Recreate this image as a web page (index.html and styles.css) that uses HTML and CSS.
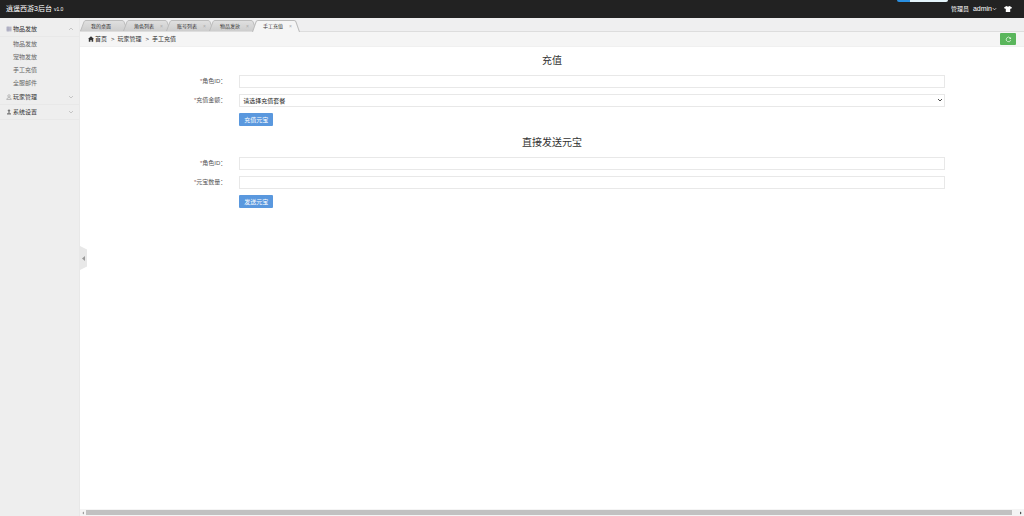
FILE: index.html
```html
<!DOCTYPE html>
<html lang="zh-CN">
<head>
    <meta charset="UTF-8">
    <meta name="viewport" content="width=device-width, initial-scale=1.0">
    <title>逍遥西游3后台</title>
    <link rel="stylesheet" href="styles.css">
</head>
<body>
    <svg class="defs" aria-hidden="true">
        <linearGradient id="tabFill" x1="0" y1="0" x2="0" y2="1">
            <stop offset="0" stop-color="#e0e0e0"/>
            <stop offset="1" stop-color="#cdcdcd"/>
        </linearGradient>
        <symbol id="tab-shape" viewBox="0 0 48 11" preserveAspectRatio="none">
            <path d="M0.5 11 L4 1.8 Q4.5 0.5 6 0.5 H42 Q43.5 0.5 44 1.8 L47.5 11"/>
        </symbol>
        <symbol id="chevron" viewBox="0 0 6 4">
            <path d="M1 1 L3 3 L5 1" fill="none" stroke="currentColor" stroke-width="0.8"/>
        </symbol>
    </svg>

    <header class="navbar">
        <a class="logo" href="#">逍遥西游3后台</a>
        <span class="version">v1.0</span>
        <div class="notice"></div>
        <nav class="userbar">
            <span>管理员</span>
            <a class="user" href="#">admin<svg class="chevron"><use href="#chevron"/></svg></a>
            <a class="skin" href="#" aria-label="换肤">
                <svg viewBox="0 0 8 6"><path d="M2.4 0 Q4 1.2 5.6 0 L8 1.6 L7 3 L6.2 2.6 V6 H1.8 V2.6 L1 3 L0 1.6 Z" fill="#fff"/></svg>
            </a>
        </nav>
    </header>

    <div class="layout">
        <aside class="sidebar">
            <div class="menu-title">
                <svg class="menu-icon" viewBox="0 0 6 6"><path d="M0.5 0.5 H5.5 V5.5 H0.5 Z" fill="#c0c0d0"/><path d="M0.5 2 H5.5 M0.5 3.8 H5.5 M2 0.5 V5.5" stroke="#9898b0" stroke-width="0.5"/></svg>
                物品发放
                <svg class="chevron up"><use href="#chevron"/></svg>
            </div>
            <ul class="menu-list">
                <li><a href="#">物品发放</a></li>
                <li><a href="#">宠物发放</a></li>
                <li><a href="#">手工充值</a></li>
                <li><a href="#">全服邮件</a></li>
            </ul>
            <div class="menu-title">
                <svg class="menu-icon" viewBox="0 0 6 6"><circle cx="3" cy="1.9" r="1.2" fill="none" stroke="#999" stroke-width="0.6"/><path d="M0.7 5.5 Q0.9 3.6 3 3.6 Q5.1 3.6 5.3 5.5 Z" fill="none" stroke="#999" stroke-width="0.6"/></svg>
                玩家管理
                <svg class="chevron"><use href="#chevron"/></svg>
            </div>
            <div class="menu-title">
                <svg class="menu-icon" viewBox="0 0 6 6"><circle cx="3" cy="1.6" r="1.2" fill="#777"/><path d="M2.4 2.5 H3.6 V4.2 H5 V5.6 H1 V4.2 H2.4 Z" fill="#777"/></svg>
                系统设置
                <svg class="chevron"><use href="#chevron"/></svg>
            </div>
        </aside>

        <main class="content">
            <button class="collapse" type="button" aria-label="收起菜单">
                <svg viewBox="0 0 3 5"><path d="M3 0 V5 L0 2.5 Z" fill="#999"/></svg>
            </button>

            <nav class="tabs">
                <a class="tab" href="#"><svg class="tab-bg"><use href="#tab-shape"/></svg><span>我的桌面</span></a>
                <a class="tab" href="#"><svg class="tab-bg"><use href="#tab-shape"/></svg><span>角色列表</span><i>×</i></a>
                <a class="tab" href="#"><svg class="tab-bg"><use href="#tab-shape"/></svg><span>账号列表</span><i>×</i></a>
                <a class="tab" href="#"><svg class="tab-bg"><use href="#tab-shape"/></svg><span>物品发放</span><i>×</i></a>
                <a class="tab active" href="#"><svg class="tab-bg"><use href="#tab-shape"/></svg><span>手工充值</span><i>×</i></a>
            </nav>

            <div class="breadcrumb">
                <svg class="home" viewBox="0 0 6 6"><path d="M3 0.3 L6 3.1 H5.2 V5.7 H3.6 V3.9 H2.4 V5.7 H0.8 V3.1 H0 Z" fill="#333"/></svg>
                <a href="#">首页</a>
                <span class="sep">&gt;</span>
                <span>玩家管理</span>
                <span class="sep">&gt;</span>
                <span>手工充值</span>
                <button class="refresh" type="button" aria-label="刷新">
                    <svg viewBox="0 0 8 8"><path d="M6.5 4.6 A2.6 2.6 0 1 1 5.9 2.2" fill="none" stroke="#dff3df" stroke-width="0.9"/><path d="M6.9 1 V3.4 H4.5 Z" fill="#dff3df"/></svg>
                </button>
            </div>

            <div class="page">
                <form class="form">
                    <h2>充值</h2>
                    <div class="row">
                        <label for="roleId"><span>*</span>角色ID：</label>
                        <div class="control"><input type="text" id="roleId"></div>
                    </div>
                    <div class="row">
                        <label for="amount"><span>*</span>充值金额：</label>
                        <div class="control select-box">
                            <select id="amount">
                                <option>请选择充值套餐</option>
                            </select>
                            <svg class="chevron"><use href="#chevron"/></svg>
                        </div>
                    </div>
                    <div class="row">
                        <div class="control offset"><button class="btn" type="button">充值元宝</button></div>
                    </div>
                </form>

                <form class="form">
                    <h2>直接发送元宝</h2>
                    <div class="row">
                        <label for="sendRoleId"><span>*</span>角色ID：</label>
                        <div class="control"><input type="text" id="sendRoleId"></div>
                    </div>
                    <div class="row">
                        <label for="quantity"><span>*</span>元宝数量：</label>
                        <div class="control"><input type="text" id="quantity"></div>
                    </div>
                    <div class="row">
                        <div class="control offset"><button class="btn" type="button">发送元宝</button></div>
                    </div>
                </form>
            </div>

            <div class="scrollbar">
                <svg viewBox="0 0 2 4"><path d="M2 0.5 V3.5 L0.3 2 Z" fill="#999"/></svg>
                <div class="thumb"></div>
                <svg viewBox="0 0 2 4"><path d="M0 0.5 V3.5 L1.7 2 Z" fill="#444"/></svg>
            </div>
        </main>
    </div>
</body>
</html>
```
FILE: styles.css
```css
* {
    margin: 0;
    padding: 0;
    box-sizing: border-box;
}

body {
    display: flex;
    flex-direction: column;
    min-height: 100vh;
    background: #fff;
    color: #444;
    font-family: "Liberation Sans", "Noto Sans CJK SC", sans-serif;
    font-size: 6px;
    line-height: 12px;
}

a {
    color: inherit;
    text-decoration: none;
}

button,
input,
select {
    font: inherit;
    color: inherit;
}

svg {
    display: block;
    flex: none;
}

.defs {
    position: absolute;
    width: 0;
    height: 0;
}

.chevron {
    width: 6px;
    height: 4px;
}

.chevron.up {
    transform: rotate(180deg);
}

/* top bar */
.navbar {
    position: relative;
    display: flex;
    align-items: center;
    height: 18px;
    padding: 0 12px 0 6px;
    background: #222;
    color: #fff;
}

.logo {
    font-size: 7px;
}

.version {
    margin-left: 2px;
    font-size: 5px;
}

.notice {
    position: absolute;
    top: 0;
    right: 76px;
    width: 51px;
    height: 2px;
    border-radius: 0 0 2px 2px;
    background: linear-gradient(90deg, #2a8fe0 26%, #e4f4fa 26%);
}

.userbar {
    display: flex;
    align-items: center;
    gap: 4px;
    margin-left: auto;
}

.user {
    display: flex;
    align-items: center;
    font-size: 7px;
}

.user .chevron {
    width: 5px;
}

.skin {
    margin-left: 3px;
}

.skin svg {
    width: 8px;
    height: 6px;
}

.layout {
    flex: 1;
    display: flex;
}

/* left menu */
.sidebar {
    flex: none;
    width: 80px;
    padding-top: 4px;
    background: #eee;
    border-right: 1px solid #e8e8e8;
}

.menu-title {
    display: flex;
    align-items: center;
    height: 15px;
    padding: 0 5px 0 6px;
    border-bottom: 1px solid #e8e8e8;
    color: #333;
}

.menu-title .chevron {
    margin-left: auto;
    color: #bbb;
}

.menu-icon {
    width: 6px;
    height: 6px;
    margin-right: 1px;
}

.menu-list {
    padding-top: 1px;
    list-style: none;
}

.menu-list a {
    display: block;
    padding-left: 13px;
    line-height: 13px;
    color: #666;
}

/* content area */
.content {
    position: relative;
    flex: 1;
    display: flex;
    flex-direction: column;
    min-width: 0;
}

.collapse {
    position: absolute;
    top: 228px;
    left: 0;
    display: flex;
    align-items: center;
    justify-content: center;
    width: 7px;
    height: 24px;
    border: 0;
    background: #e8e8e8;
    clip-path: polygon(0 0, 100% 15%, 100% 85%, 0 100%);
}

.collapse svg {
    width: 3px;
    height: 5px;
}

.tabs {
    display: flex;
    align-items: flex-end;
    height: 14px;
    background: #efeff0;
    border-bottom: 1px solid #ddd;
}

.tab {
    position: relative;
    display: flex;
    align-items: center;
    width: 48px;
    height: 11px;
    margin-right: -5px;
    padding: 0 8px 0 11px;
    font-size: 5px;
    color: #333;
}

.tab span {
    position: relative;
}

.tab i {
    position: relative;
    margin-left: auto;
    font-style: normal;
    color: #aaa;
}

.tab-bg {
    position: absolute;
    top: 0;
    left: 0;
    width: 100%;
    height: 100%;
    fill: url(#tabFill);
    stroke: #bcbcbc;
    stroke-width: 1;
}

.tab.active {
    height: 12px;
    margin-bottom: -1px;
}

.tab.active .tab-bg {
    fill: #f5f5f5;
}

.breadcrumb {
    display: flex;
    align-items: center;
    gap: 4px;
    height: 15px;
    padding: 0 8px;
    background: #f5f5f5;
    border-bottom: 1px solid #f0f0f0;
    color: #333;
}

.breadcrumb .sep {
    margin-right: -1px;
}

.home {
    width: 6px;
    height: 6px;
    margin-right: -3px;
}

.refresh {
    display: flex;
    align-items: center;
    justify-content: center;
    width: 16px;
    height: 12px;
    margin-left: auto;
    border: 0;
    border-radius: 1px;
    background: #5ab65c;
}

.refresh svg {
    width: 7px;
    height: 7px;
}

.page {
    flex: 1;
    padding-top: 6px;
}

/* forms */
.form {
    margin-bottom: 9px;
}

.form h2 {
    margin-bottom: 6px;
    font-size: 10px;
    font-weight: normal;
    line-height: 16px;
    text-align: center;
    color: #333;
}

.row {
    display: flex;
    margin-bottom: 6px;
}

.row label {
    width: 16.66%;
    padding-right: 11px;
    text-align: right;
    color: #555;
}

.row label span {
    color: #966;
}

.control {
    width: 75%;
    padding-left: 2px;
}

.control.offset {
    margin-left: 16.66%;
}

.control input,
.control select {
    display: block;
    width: 100%;
    height: 13px;
    padding: 0 3px;
    border: 1px solid #e8e8e8;
    background: #fff;
}

.control select {
    appearance: none;
    color: #222;
}

.select-box {
    position: relative;
}

.select-box .chevron {
    position: absolute;
    top: 4px;
    right: 2px;
    color: #222;
    pointer-events: none;
}

.btn {
    display: block;
    height: 13px;
    padding: 0 5px;
    border: 0;
    border-radius: 1px;
    background: #5a98de;
    color: #fff;
}

/* horizontal scrollbar */
.scrollbar {
    display: flex;
    align-items: center;
    gap: 2px;
    height: 7px;
    padding: 0 2px;
    background: #f4f4f4;
}

.scrollbar svg {
    width: 2px;
    height: 4px;
}

.thumb {
    flex: 1;
    height: 5px;
    margin-right: 6px;
    background: #c1c1c1;
}
```
